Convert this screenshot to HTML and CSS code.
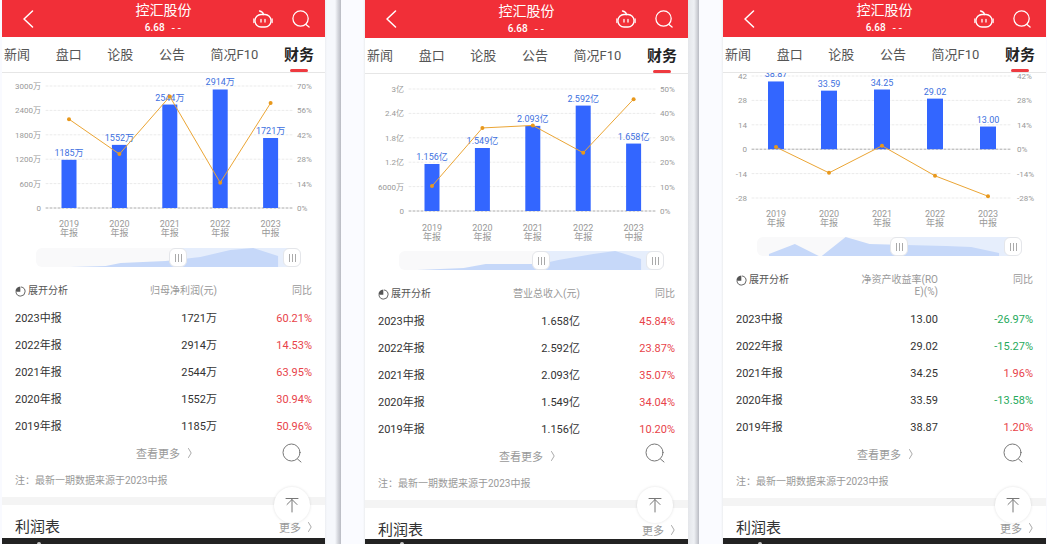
FILE: index.html
```
<!DOCTYPE html>
<html lang="zh-CN">
<head>
    <meta charset="UTF-8">
    <title>控汇股份 - 财务</title>
    <link rel="stylesheet" href="styles.css">
</head>
<body>
    <svg class="sprite" aria-hidden="true">
        <symbol id="icon-back" viewBox="0 0 12 18">
            <path d="M10.500 1 2 9l8.500 8"/>
        </symbol>
        <symbol id="icon-robot" viewBox="0 0 20 20">
            <rect x="2" y="5.500" width="16" height="12.500" rx="6"/>
            <path d="M10.500 5.500Q10 2.800 6.500 2M8 10.500v2.500M12 10.500v2.500M.9 10v3.500M19.100 10v3.500"/>
        </symbol>
        <symbol id="icon-search" viewBox="0 0 20 20">
            <circle cx="9.500" cy="9.500" r="8.500"/>
            <path d="m15.500 16 3.500 3"/>
        </symbol>
        <symbol id="icon-pie" viewBox="0 0 12 12">
            <path d="M7 1.100A5 5 0 1 1 1.100 7"/>
            <path class="solid" d="M5.800.500V6.200H.500A5.500 5.500 0 0 1 5.800.500Z"/>
        </symbol>
        <symbol id="icon-more" viewBox="0 0 6 10">
            <path d="M1.500.500 4.200 5 1.500 9.500"/>
        </symbol>
        <symbol id="icon-top" viewBox="0 0 14 16">
            <path d="M1 1.500h12M7 15V2.500M2 7.500l5-5 5 5"/>
        </symbol>
    </svg>

    <div class="screens">
        <section class="phone">
            <header class="header">
                <button class="icon-btn" aria-label="返回"><svg class="icon-back"><use href="#icon-back"/></svg></button>
                <div class="stock">
                    <h1>控汇股份</h1>
                    <p>6.68 <span>--</span></p>
                </div>
                <div class="actions">
                    <button class="icon-btn" aria-label="助手"><svg class="icon-robot"><use href="#icon-robot"/></svg></button>
                    <button class="icon-btn" aria-label="搜索"><svg class="icon-search"><use href="#icon-search"/></svg></button>
                </div>
            </header>
            <nav class="tabs">
                <a href="#">新闻</a>
                <a href="#">盘口</a>
                <a href="#">论股</a>
                <a href="#">公告</a>
                <a href="#">简况F10</a>
                <a href="#" class="active">财务</a>
            </nav>
            <main class="content">
                <div class="chart" data-chart="profit"></div>
                <div class="range">
                    <svg viewBox="0 0 266 19" preserveAspectRatio="none">
                        <rect class="range-window" x="142" y="0" width="114" height="19"/>
                        <path d="M34 19 70 18 85 15 130 13 165 9 195 2 218 0 243 8V19Z"/>
                    </svg>
                    <input type="range" value="54" aria-label="开始">
                    <input type="range" value="100" aria-label="结束">
                </div>
                <table class="report">
                    <thead>
                        <tr>
                            <th><button class="expand"><svg><use href="#icon-pie"/></svg>展开分析</button></th>
                            <th>归母净利润(元)</th>
                            <th>同比</th>
                        </tr>
                    </thead>
                    <tbody>
                        <tr><td>2023中报</td><td>1721万</td><td class="up">60.21%</td></tr>
                        <tr><td>2022年报</td><td>2914万</td><td class="up">14.53%</td></tr>
                        <tr><td>2021年报</td><td>2544万</td><td class="up">63.95%</td></tr>
                        <tr><td>2020年报</td><td>1552万</td><td class="up">30.94%</td></tr>
                        <tr><td>2019年报</td><td>1185万</td><td class="up">50.96%</td></tr>
                    </tbody>
                </table>
                <a href="#" class="more">查看更多<svg><use href="#icon-more"/></svg></a>
                <p class="note">注：最新一期数据来源于2023中报</p>
                <div class="section-title">
                    <h2>利润表</h2>
                    <a href="#">更多<svg><use href="#icon-more"/></svg></a>
                </div>
            </main>
            <div class="floating">
                <button class="float-search" aria-label="搜索"><svg><use href="#icon-search"/></svg></button>
                <button class="float-top" aria-label="回到顶部"><svg><use href="#icon-top"/></svg></button>
            </div>
            <footer class="ticker"></footer>
        </section>

        <div class="divider"></div>

        <section class="phone phone-tall">
            <header class="header">
                <button class="icon-btn" aria-label="返回"><svg class="icon-back"><use href="#icon-back"/></svg></button>
                <div class="stock">
                    <h1>控汇股份</h1>
                    <p>6.68 <span>--</span></p>
                </div>
                <div class="actions">
                    <button class="icon-btn" aria-label="助手"><svg class="icon-robot"><use href="#icon-robot"/></svg></button>
                    <button class="icon-btn" aria-label="搜索"><svg class="icon-search"><use href="#icon-search"/></svg></button>
                </div>
            </header>
            <nav class="tabs">
                <a href="#">新闻</a>
                <a href="#">盘口</a>
                <a href="#">论股</a>
                <a href="#">公告</a>
                <a href="#">简况F10</a>
                <a href="#" class="active">财务</a>
            </nav>
            <main class="content">
                <div class="chart" data-chart="revenue"></div>
                <div class="range">
                    <svg viewBox="0 0 266 19" preserveAspectRatio="none">
                        <rect class="range-window" x="142" y="0" width="114" height="19"/>
                        <path d="M18 19 65 17 87 13 142 13 160 9 195 3 217 0 243 8V19Z"/>
                    </svg>
                    <input type="range" value="54" aria-label="开始">
                    <input type="range" value="100" aria-label="结束">
                </div>
                <table class="report">
                    <thead>
                        <tr>
                            <th><button class="expand"><svg><use href="#icon-pie"/></svg>展开分析</button></th>
                            <th>营业总收入(元)</th>
                            <th>同比</th>
                        </tr>
                    </thead>
                    <tbody>
                        <tr><td>2023中报</td><td>1.658亿</td><td class="up">45.84%</td></tr>
                        <tr><td>2022年报</td><td>2.592亿</td><td class="up">23.87%</td></tr>
                        <tr><td>2021年报</td><td>2.093亿</td><td class="up">35.07%</td></tr>
                        <tr><td>2020年报</td><td>1.549亿</td><td class="up">34.04%</td></tr>
                        <tr><td>2019年报</td><td>1.156亿</td><td class="up">10.20%</td></tr>
                    </tbody>
                </table>
                <a href="#" class="more">查看更多<svg><use href="#icon-more"/></svg></a>
                <p class="note">注：最新一期数据来源于2023中报</p>
                <div class="section-title">
                    <h2>利润表</h2>
                    <a href="#">更多<svg><use href="#icon-more"/></svg></a>
                </div>
            </main>
            <div class="floating">
                <button class="float-search" aria-label="搜索"><svg><use href="#icon-search"/></svg></button>
                <button class="float-top" aria-label="回到顶部"><svg><use href="#icon-top"/></svg></button>
            </div>
            <footer class="ticker"></footer>
        </section>

        <div class="divider divider-narrow"></div>

        <section class="phone">
            <header class="header">
                <button class="icon-btn" aria-label="返回"><svg class="icon-back"><use href="#icon-back"/></svg></button>
                <div class="stock">
                    <h1>控汇股份</h1>
                    <p>6.68 <span>--</span></p>
                </div>
                <div class="actions">
                    <button class="icon-btn" aria-label="助手"><svg class="icon-robot"><use href="#icon-robot"/></svg></button>
                    <button class="icon-btn" aria-label="搜索"><svg class="icon-search"><use href="#icon-search"/></svg></button>
                </div>
            </header>
            <nav class="tabs">
                <a href="#">新闻</a>
                <a href="#">盘口</a>
                <a href="#">论股</a>
                <a href="#">公告</a>
                <a href="#">简况F10</a>
                <a href="#" class="active">财务</a>
            </nav>
            <main class="content">
                <div class="chart" data-chart="roe"></div>
                <div class="range">
                    <svg viewBox="0 0 266 19" preserveAspectRatio="none">
                        <rect class="range-window" x="142" y="0" width="114" height="19"/>
                        <path d="M12 19V17L38 7 62 19H65L89 0 113 7 150 8 190 9 215 10 243 16V19Z"/>
                    </svg>
                    <input type="range" value="54" aria-label="开始">
                    <input type="range" value="100" aria-label="结束">
                </div>
                <table class="report">
                    <thead>
                        <tr>
                            <th><button class="expand"><svg><use href="#icon-pie"/></svg>展开分析</button></th>
                            <th>净资产收益率(ROE)(%)</th>
                            <th>同比</th>
                        </tr>
                    </thead>
                    <tbody>
                        <tr><td>2023中报</td><td>13.00</td><td class="down">-26.97%</td></tr>
                        <tr><td>2022年报</td><td>29.02</td><td class="down">-15.27%</td></tr>
                        <tr><td>2021年报</td><td>34.25</td><td class="up">1.96%</td></tr>
                        <tr><td>2020年报</td><td>33.59</td><td class="down">-13.58%</td></tr>
                        <tr><td>2019年报</td><td>38.87</td><td class="up">1.20%</td></tr>
                    </tbody>
                </table>
                <a href="#" class="more">查看更多<svg><use href="#icon-more"/></svg></a>
                <p class="note">注：最新一期数据来源于2023中报</p>
                <div class="section-title">
                    <h2>利润表</h2>
                    <a href="#">更多<svg><use href="#icon-more"/></svg></a>
                </div>
            </main>
            <div class="floating">
                <button class="float-search" aria-label="搜索"><svg><use href="#icon-search"/></svg></button>
                <button class="float-top" aria-label="回到顶部"><svg><use href="#icon-top"/></svg></button>
            </div>
            <footer class="ticker"></footer>
        </section>
    </div>

    <script src="script.js"></script>
</body>
</html>
```

FILE: styles.css
```
* {
    box-sizing: border-box;
}

body {
    margin: 0;
    background: #f9faff;
    color: #333;
    font-family: Roboto, "Noto Sans CJK SC", sans-serif;
    font-size: 11px;
}

h1, h2, p {
    margin: 0;
    font-weight: normal;
}

a {
    color: inherit;
    text-decoration: none;
}

button {
    padding: 0;
    border: 0;
    background: none;
    color: inherit;
    font: inherit;
}

svg {
    display: block;
    fill: none;
    stroke: currentColor;
    stroke-linecap: round;
    stroke-linejoin: round;
}

.sprite {
    position: absolute;
    width: 0;
    height: 0;
}

.screens {
    display: grid;
    grid-template-columns: 1fr 40px 1fr 35px 1fr;
    height: 100vh;
    padding: 0 1px 0 2px;
}

.divider {
    background: linear-gradient(90deg, #eceef2 0, #f6f8fc 2px, #f6f8fc 10px, #d5d7dd 13px, #b9bbc3 16px, #fafbff 16px, #fafbff 38px, #eceef0 40px);
}

.divider-narrow {
    background: linear-gradient(90deg, #e4e6ea 0, #eef0f4 6px, #d0d2d8 9px, #b9bbc3 11px, #fafbff 11px, #fafbff 33px, #eceef0 35px);
}

.phone {
    position: relative;
    display: flex;
    flex-direction: column;
    min-width: 0;
    overflow: hidden;
    background: #fff;
}

/* header */
.header {
    display: grid;
    grid-template-columns: 1fr auto 1fr;
    align-items: center;
    flex: none;
    height: 37px;
    padding: 0 15px;
    background: #f12f38;
    color: #fff;
}

.phone-tall .header {
    height: 38px;
}

.icon-back {
    width: 12px;
    height: 18px;
    margin-left: 5px;
    stroke-width: 1.5;
}

.stock {
    text-align: center;
}

.stock h1 {
    font-size: 14px;
    line-height: 20px;
}

.stock p {
    font-size: 10px;
    font-weight: 500;
    line-height: 16px;
}

.stock span {
    margin-left: 3px;
    font-family: "Liberation Mono", monospace;
}

.actions {
    display: flex;
    align-items: center;
    justify-content: flex-end;
    gap: 19px;
}

.icon-robot {
    width: 20px;
    height: 20px;
    stroke-width: 1.3;
}

.icon-search {
    width: 18px;
    height: 18px;
    stroke-width: 1.4;
}

/* tabs */
.tabs {
    display: flex;
    justify-content: space-between;
    flex: none;
    height: 36px;
    padding: 0 11px 0 2px;
    border-bottom: 1px solid #e6e6e6;
    color: #555;
    font-size: 13px;
    line-height: 36px;
}

.tabs .active {
    position: relative;
    color: #222;
    font-size: 15px;
    font-weight: bold;
}

.tabs .active::after {
    content: "";
    position: absolute;
    bottom: 0;
    left: 6px;
    right: 6px;
    height: 3px;
    border-radius: 2px;
    background: #ee3a40;
}

.content {
    flex: 1;
    min-height: 0;
    overflow: hidden;
}

/* chart */
.chart svg {
    width: 100%;
    stroke: none;
}

.chart .axis {
    fill: #999;
    font-size: 8px;
}

.chart .period {
    fill: #999;
    font-size: 9px;
}

.chart .value {
    fill: #3d70e0;
    font-size: 9px;
}

.chart .grid {
    stroke: #ebebeb;
    stroke-dasharray: 2 2;
}

.chart .zero {
    stroke: #aaa;
}

.chart .bar {
    fill: #3366ff;
}

.chart .line {
    fill: none;
    stroke: #eba534;
}

.chart .dot {
    fill: #e8981c;
}

/* zoom range under the chart */
.range {
    position: relative;
    height: 19px;
    margin: 0 24px 0 34px;
}

.range svg {
    width: 100%;
    height: 19px;
    border-radius: 6px;
    background: #f9f9fa;
    stroke: none;
}

.range path {
    fill: #c6d8f9;
}

.range-window {
    fill: #e6eefc;
}

.range input {
    position: absolute;
    inset: 0;
    width: 100%;
    height: 19px;
    margin: 0;
    background: none;
    appearance: none;
    pointer-events: none;
}

.range input::-webkit-slider-thumb {
    width: 18px;
    height: 19px;
    border: 1px solid #e4e6ea;
    border-radius: 6px;
    background: repeating-linear-gradient(90deg, #aaa 0 1px, #fff 1px 3px) center / 7px 8px no-repeat #fff;
    appearance: none;
    pointer-events: auto;
}

/* report table */
.report {
    width: calc(100% - 26px);
    margin: 10px 13px 0;
    border-collapse: collapse;
    table-layout: fixed;
}

.report th,
.report td {
    padding: 7px 0;
    line-height: 13px;
    text-align: right;
    vertical-align: top;
}

.report th {
    padding: 8px 0;
    color: #999;
    font-size: 10px;
    font-weight: normal;
    line-height: 12px;
    word-break: break-all;
}

.report th:nth-child(1) {
    width: 40%;
}

.report th:nth-child(2) {
    width: 28%;
    padding-left: 4px;
}

.report th:first-child,
.report td:first-child {
    text-align: left;
}

.expand {
    display: flex;
    align-items: center;
    gap: 2px;
    color: #555;
    line-height: 12px;
}

.expand svg {
    width: 11px;
    height: 11px;
}

.solid {
    fill: currentColor;
    stroke: none;
}

.up {
    color: #e8434a;
}

.down {
    color: #1faa5c;
}

.more {
    display: flex;
    align-items: center;
    justify-content: center;
    gap: 7px;
    height: 25px;
    padding-left: 2px;
    color: #999;
}

.more svg,
.section-title svg {
    width: 6px;
    height: 10px;
    color: #aaa;
}

.note {
    padding: 0 13px;
    border-bottom: 8px solid #f4f4f4;
    color: #999;
    font-size: 10px;
    line-height: 32px;
}

.section-title {
    display: flex;
    align-items: center;
    justify-content: space-between;
    height: 44px;
    padding: 0 12px 0 13px;
    color: #999;
}

.section-title h2 {
    color: #333;
    font-size: 15px;
    line-height: 20px;
}

.section-title a {
    display: flex;
    align-items: center;
    gap: 6px;
}

/* floating buttons */
.floating {
    position: absolute;
    right: 15px;
    bottom: 21px;
    display: flex;
    flex-direction: column;
    align-items: center;
    gap: 24px;
    color: #777;
}

.float-search svg {
    width: 20px;
    height: 20px;
}

.float-top {
    display: grid;
    place-items: center;
    width: 36px;
    height: 36px;
    border-radius: 50%;
    background: #fff;
    box-shadow: 0 0 3px rgba(0, 0, 0, 0.12);
}

.float-top svg {
    width: 14px;
    height: 16px;
}

.ticker {
    display: flex;
    align-items: flex-end;
    flex: none;
    height: 6px;
    padding-left: 35px;
    background: #222;
}

.ticker::before {
    content: "";
    width: 4px;
    height: 2px;
    border-radius: 2px 2px 0 0;
    background: #ccc;
}

.phone-tall .ticker {
    height: 5px;
}
```

FILE: script.js
```
const periods = ["2019 年报", "2020 年报", "2021 年报", "2022 年报", "2023 中报"];

// top is the y of the highest tick, step the distance between two ticks
const charts = {
    profit: {
        height: 175, left: 44, right: 290, top: 13, step: 24.4, first: 67, gap: 50.4, barWidth: 15, periodY: 154,
        ticks: ["3000万", "2400万", "1800万", "1200万", "600万", "0"],
        rates: ["70%", "56%", "42%", "28%", "14%", "0%"],
        unit: 600, rateUnit: 14, zeroIndex: 5,
        values: [1185, 1552, 2544, 2914, 1721],
        labels: ["1185万", "1552万", "2544万", "2914万", "1721万"],
        growth: [50.96, 30.94, 63.95, 14.53, 60.21]
    },
    revenue: {
        height: 177, left: 44, right: 290, top: 15, step: 24.4, first: 67, gap: 50.4, barWidth: 15, periodY: 157,
        ticks: ["3亿", "2.4亿", "1.8亿", "1.2亿", "6000万", "0"],
        rates: ["50%", "40%", "30%", "20%", "10%", "0%"],
        unit: 0.6, rateUnit: 10, zeroIndex: 5,
        values: [1.156, 1.549, 2.093, 2.592, 1.658],
        labels: ["1.156亿", "1.549亿", "2.093亿", "2.592亿", "1.658亿"],
        growth: [10.20, 34.04, 35.07, 23.87, 45.84]
    },
    roe: {
        height: 164, left: 29, right: 289, top: 3, step: 24.4, first: 53, gap: 53, barWidth: 16, periodY: 144,
        ticks: ["42", "28", "14", "0", "-14", "-28"],
        rates: ["42%", "28%", "14%", "0%", "-14%", "-28%"],
        unit: 14, rateUnit: 14, zeroIndex: 3,
        values: [38.87, 33.59, 34.25, 29.02, 13.00],
        labels: ["38.87", "33.59", "34.25", "29.02", "13.00"],
        growth: [1.20, -13.58, 1.96, -15.27, -26.97]
    }
};

function drawChart(c) {
    const zeroY = c.top + c.step * c.zeroIndex;
    let grid = "", bars = "", dots = "", texts = "";

    c.ticks.forEach((tick, i) => {
        const y = c.top + c.step * i;
        grid += `<line class="grid ${i === c.zeroIndex ? "zero" : ""}" x1="${c.left}" x2="${c.right}" y1="${y}" y2="${y}"/>`;
        texts += `<text class="axis" x="${c.left - 5}" y="${y + 3}" text-anchor="end">${tick}</text>`;
        texts += `<text class="axis" x="${c.right + 5}" y="${y + 3}">${c.rates[i]}</text>`;
    });

    const points = c.values.map((value, i) => {
        const x = c.first + c.gap * i;
        const h = value / c.unit * c.step;
        const y = zeroY - c.growth[i] / c.rateUnit * c.step;
        const [year, kind] = periods[i].split(" ");
        bars += `<rect class="bar" x="${x - c.barWidth / 2}" y="${zeroY - h}" width="${c.barWidth}" height="${h}"/>`;
        texts += `<text class="value" x="${x}" y="${zeroY - h - 4}" text-anchor="middle">${c.labels[i]}</text>`;
        texts += `<text class="period" x="${x}" y="${c.periodY}" text-anchor="middle">${year}</text>`;
        texts += `<text class="period" x="${x}" y="${c.periodY + 9}" text-anchor="middle">${kind}</text>`;
        dots += `<circle class="dot" cx="${x}" cy="${y}" r="2"/>`;
        return `${x},${y}`;
    });

    return `<svg viewBox="0 0 323 ${c.height}">${grid}${bars}${texts}
        <polyline class="line" points="${points.join(" ")}"/>${dots}</svg>`;
}

document.querySelectorAll(".chart").forEach(el => {
    el.innerHTML = drawChart(charts[el.dataset.chart]);
});
```
